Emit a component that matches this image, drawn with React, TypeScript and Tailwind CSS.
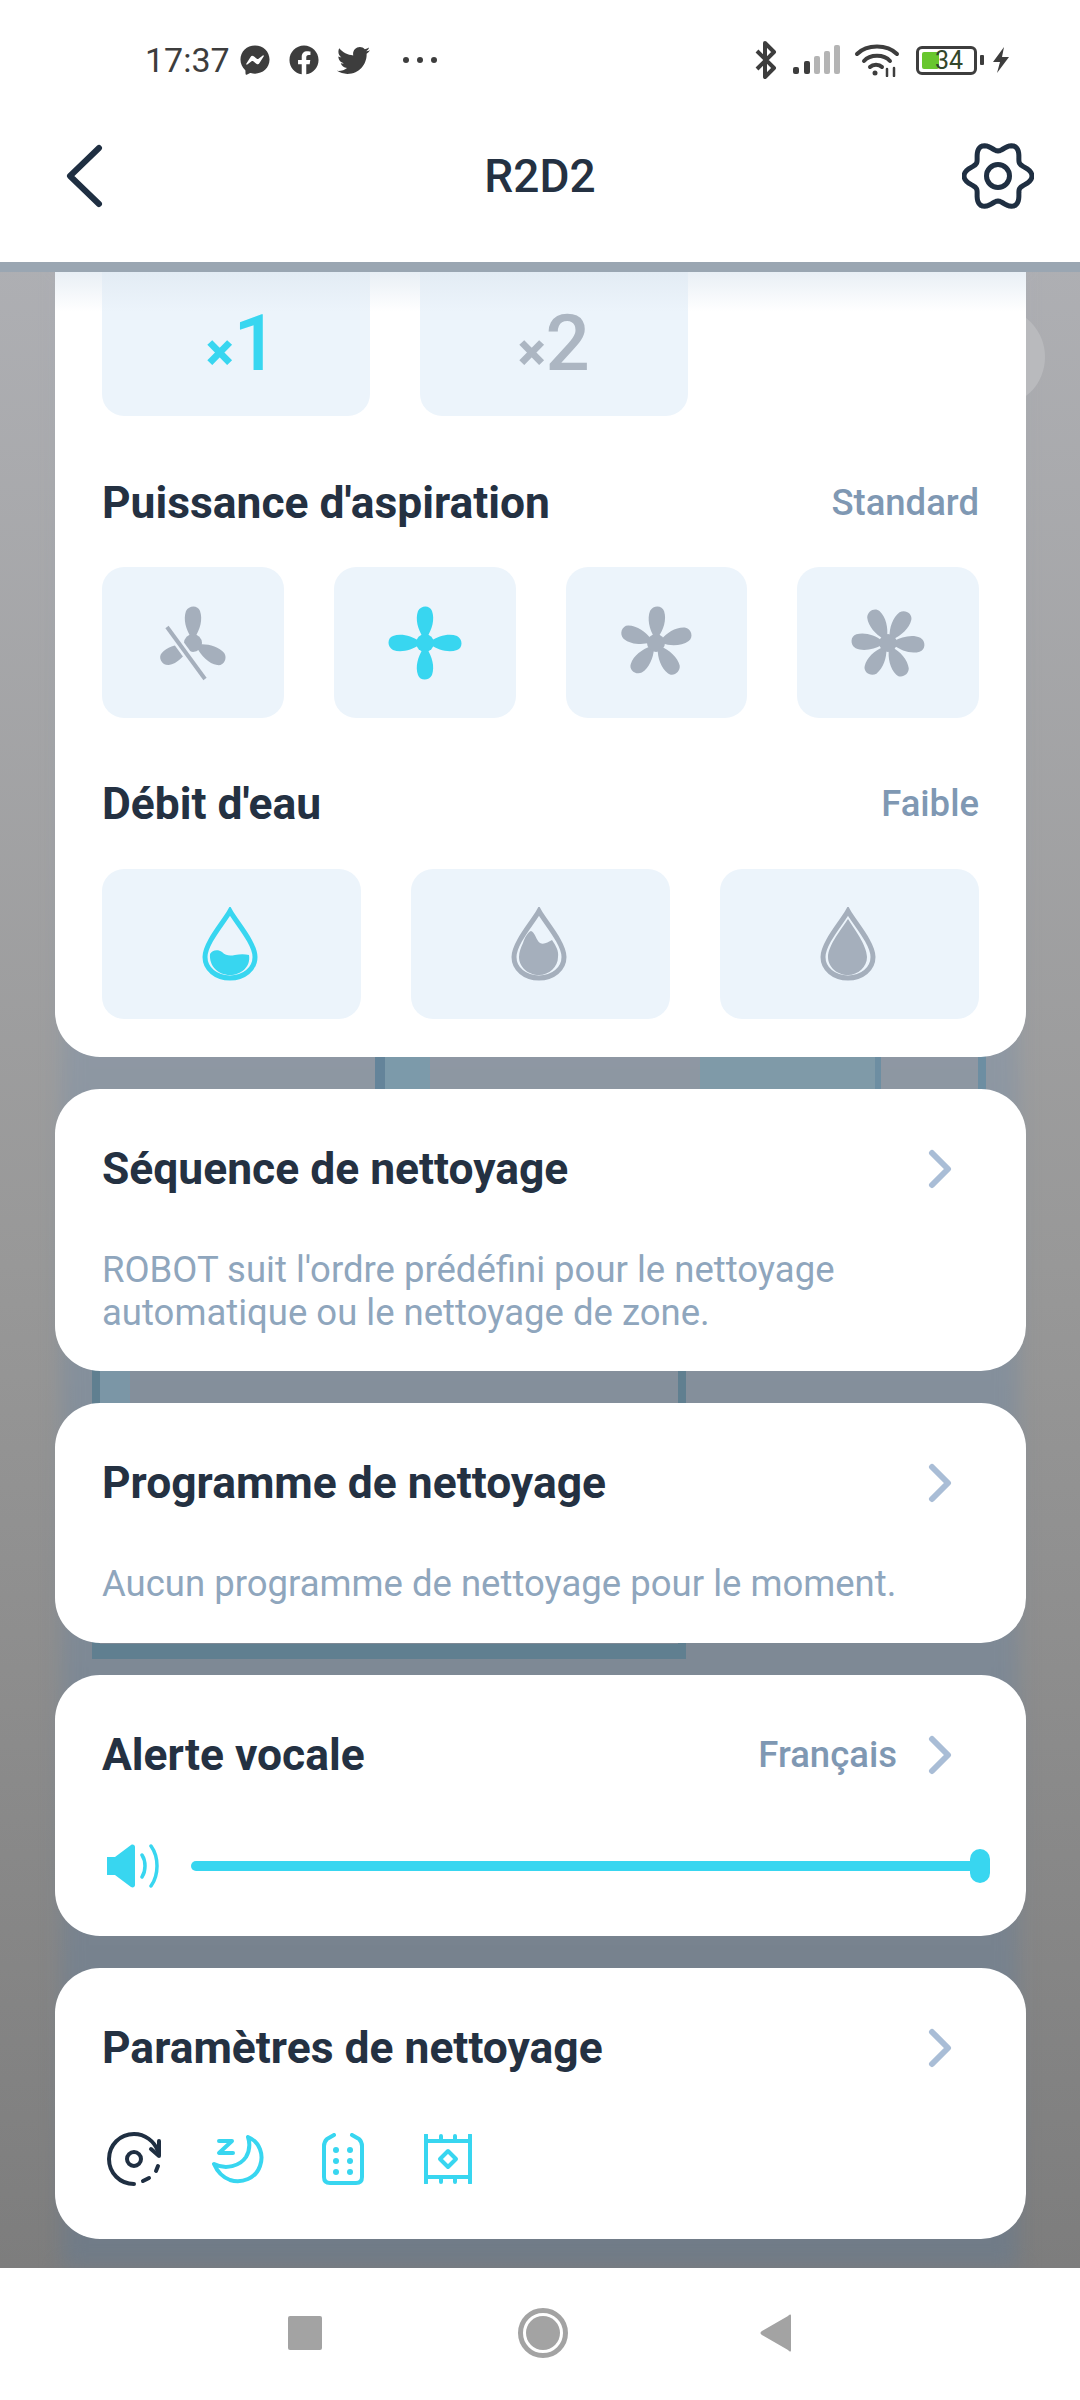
import { FaFacebook, FaFacebookMessenger, FaTwitter } from "react-icons/fa";

const CYAN = "#38d6f0";
const GREY = "#a5afbc";

function Fan({ blades, color, start = 0, off = false }: { blades: number; color: string; start?: number; off?: boolean }) {
  const angles = Array.from({ length: blades }, (_, i) => start + (i * 360) / blades);
  return (
    <svg viewBox="-40 -40 80 80" className="w-[80px] h-[80px]">
      {angles.map((a) => (
        <path key={a} transform={`rotate(${a})`} d="M-2 -6 C-7 -13 -10 -24 -7 -32 C-4 -38 5 -38 7 -32 C10 -24 7 -13 2 -6 Z" fill={color} />
      ))}
      <circle r="9" fill={color} />
      {off && <path d="M-26 -16 L12 36" stroke="#edf4fb" strokeWidth="9" />}
      {off && <path d="M-26 -16 L12 36" stroke={color} strokeWidth="4" />}
    </svg>
  );
}

function Drop({ color, level }: { color: string; level: "low" | "mid" | "full" }) {
  const fill =
    level === "low"
      ? "M8 47 C10 43 16 42 20 45 C24 49 28 49 33 48 C38 47 43 47 47 48 C49 60 39 68 28 68 C16 68 7 59 8 47 Z"
      : level === "mid"
        ? "M12 36 C14 30 17 25 20 24 C24 25 25 33 29 36 C33 38 37 35 41 33 C45 39 48 44 47 50 C47 60 38 68 28 68 C17 68 8 60 8 50 C8 45 10 40 12 36 Z"
        : "M28 12 C33 20 47 38 47 50 C47 60 38 68 28 68 C17 68 8 60 8 50 C8 38 23 20 28 12 Z";
  return (
    <svg viewBox="0 0 56 74" className="w-[56px] h-[74px] mr-[4px]">
      <path d="M28 4 C34 15 53 36 53 50 C53 62 42 71 28 71 C14 71 3 62 3 50 C3 36 22 15 28 4 Z" fill="none" stroke={color} strokeWidth="5" />
      <path d={fill} fill={color} />
    </svg>
  );
}

function Chevron() {
  return (
    <svg viewBox="0 0 26 40" className="w-[26px] h-[40px]" fill="none" stroke="#a9bdd6" strokeWidth="6" strokeLinecap="round" strokeLinejoin="round">
      <path d="M5 4 L21 20 L5 36" />
    </svg>
  );
}

function Gear() {
  const pts = Array.from({ length: 121 }, (_, i) => {
    const t = (i / 120) * Math.PI * 2;
    const r = 29.5 + 4.5 * Math.cos(6 * t);
    return `${(36 + r * Math.cos(t)).toFixed(2)} ${(36 + r * Math.sin(t)).toFixed(2)}`;
  });
  return (
    <svg viewBox="0 0 72 72" className="w-[72px] h-[72px]" fill="none" stroke="#1f2f42" strokeWidth="5">
      <path d={`M${pts.join(" L")} Z`} strokeLinejoin="round" />
      <circle cx="36" cy="36" r="11.5" />
    </svg>
  );
}

function StatusBar() {
  return (
    <div className="h-[92px] pt-[28px] pl-[145px] pr-[70px] flex items-center text-[#3d3d3d]">
      <span className="text-[34px] leading-none w-[95px]">17:37</span>
      <FaFacebookMessenger className="w-[30px] h-[30px]" />
      <FaFacebook className="w-[30px] h-[30px] ml-[19px]" />
      <FaTwitter className="w-[33px] h-[33px] ml-[18px]" />
      <div className="flex gap-[8px] ml-[33px]">
        <span className="w-[6px] h-[6px] rounded-full bg-[#3d3d3d]" />
        <span className="w-[6px] h-[6px] rounded-full bg-[#3d3d3d]" />
        <span className="w-[6px] h-[6px] rounded-full bg-[#3d3d3d]" />
      </div>

      <div className="ml-auto flex items-center">
        <svg viewBox="0 0 24 40" className="w-[24px] h-[40px]" fill="none" stroke="#3d3d3d" strokeWidth="4" strokeLinejoin="round">
          <path d="M3 11 L20 28 L11 37 L11 3 L20 12 L3 29" />
        </svg>
        <svg viewBox="0 0 48 30" className="w-[48px] h-[30px] ml-[15px]">
          <rect x="0" y="22" width="6" height="7" rx="2" fill="#3d3d3d" />
          <rect x="11" y="16" width="6" height="13" rx="2" fill="#3d3d3d" />
          <rect x="21" y="11" width="6" height="18" rx="2" fill="#b4b4b4" />
          <rect x="31" y="6" width="6" height="23" rx="2" fill="#b4b4b4" />
          <rect x="41" y="0" width="6" height="29" rx="2" fill="#b4b4b4" />
        </svg>
        <svg viewBox="0 0 46 34" className="w-[46px] h-[34px] ml-[13px]" fill="none" stroke="#3d3d3d" strokeWidth="4" strokeLinecap="round">
          <path d="M3 11 C13 1 33 1 43 11" />
          <path d="M10 18 C16 11 30 11 36 18" />
          <path d="M16 24 C19 21 25 21 28 24" />
          <circle cx="21" cy="30" r="2.5" fill="#3d3d3d" stroke="none" />
          <path d="M33 26 V33 M40 25 V33" strokeWidth="2.5" />
        </svg>
        <div className="relative w-[61px] h-[29px] ml-[16px] rounded-[6px] border-[3px] border-[#3d3d3d] flex items-center">
          <div className="absolute left-[3px] top-[3px] bottom-[3px] w-[17px] rounded-[2px] bg-[#68c62e]" />
          <span className="relative pl-[16px] text-[25px] leading-none text-[#33472b]">34</span>
        </div>
        <div className="w-[4px] h-[10px] ml-[3px] rounded-[1px] bg-[#3d3d3d]" />
        <svg viewBox="0 0 18 26" className="w-[18px] h-[26px] ml-[8px]" fill="#3d3d3d">
          <path d="M12 0 L1 15 L8 15 L5 26 L17 10 L10 10 Z" />
        </svg>
      </div>
    </div>
  );
}

function Header() {
  return (
    <header className="h-[170px] pb-[2px] pl-[64px] pr-[46px] flex items-center justify-between">
      <svg viewBox="0 0 40 64" className="w-[40px] h-[64px]" fill="none" stroke="#1f2f42" strokeWidth="6" strokeLinecap="round" strokeLinejoin="round">
        <path d="M35 4 L6 32 L35 60" />
      </svg>
      <h1 className="text-[46px] font-medium text-[#243142] leading-none ml-[14px]">R2D2</h1>
      <Gear />
    </header>
  );
}

function Tile({ children, className = "" }: { children: React.ReactNode; className?: string }) {
  return <div className={`bg-[#ecf4fb] rounded-[22px] flex items-center justify-center ${className}`}>{children}</div>;
}

function Times({ n, color }: { n: string; color: string }) {
  return (
    <div className="flex items-end" style={{ color }}>
      <span className="text-[52px] leading-none font-black mb-[4px]">×</span>
      <span className="text-[78px] leading-none font-medium">{n}</span>
    </div>
  );
}

function ModeCard() {
  return (
    <section className="relative bg-white rounded-b-[45px] px-[47px] h-[785px] overflow-hidden">
      <div className="grid grid-cols-[268px_268px] gap-x-[50px]">
        <Tile className="h-[144px] rounded-t-none pl-[12px]">
          <Times n="1" color={CYAN} />
        </Tile>
        <Tile className="h-[144px] rounded-t-none">
          <Times n="2" color="#acb6c2" />
        </Tile>
      </div>
      <div className="absolute left-0 right-0 top-0 h-[40px] bg-gradient-to-b from-[#dfe8f1]/70 to-transparent" />

      <div className="flex items-center justify-between mt-[63px] h-[48px]">
        <h2 className="text-[44.4px] font-bold text-[#243142] leading-none">Puissance d'aspiration</h2>
        <span className="text-[36.5px] font-medium text-[#7f98b3] leading-none">Standard</span>
      </div>
      <div className="grid grid-cols-4 gap-x-[50px] mt-[40px]">
        <Tile className="h-[151px]"><Fan blades={3} color={GREY} off /></Tile>
        <Tile className="h-[151px]"><Fan blades={4} color={CYAN} /></Tile>
        <Tile className="h-[151px]"><Fan blades={5} color={GREY} start={2} /></Tile>
        <Tile className="h-[151px]"><Fan blades={6} color={GREY} start={-27} /></Tile>
      </div>

      <div className="flex items-center justify-between mt-[62px] h-[48px]">
        <h2 className="text-[44.4px] font-bold text-[#243142] leading-none">Débit d'eau</h2>
        <span className="text-[36.5px] font-medium text-[#7f98b3] leading-none">Faible</span>
      </div>
      <div className="grid grid-cols-3 gap-x-[50px] mt-[41px]">
        <Tile className="h-[150px]"><Drop color={CYAN} level="low" /></Tile>
        <Tile className="h-[150px]"><Drop color={GREY} level="mid" /></Tile>
        <Tile className="h-[150px]"><Drop color={GREY} level="full" /></Tile>
      </div>
    </section>
  );
}

function InfoCard({ title, lines, height }: { title: string; lines: string[]; height: string }) {
  return (
    <section className={`bg-white rounded-[45px] px-[47px] pt-[56px] ${height}`}>
      <div className="flex items-center justify-between h-[48px] pr-[26px]">
        <h2 className="text-[44.4px] font-bold text-[#243142] leading-none">{title}</h2>
        <Chevron />
      </div>
      <p className="mt-[55px] text-[36.5px] leading-[43px] text-[#8fa6bd]">
        {lines.map((l) => (
          <span key={l} className="block">{l}</span>
        ))}
      </p>
    </section>
  );
}

function VolumeCard() {
  return (
    <section className="bg-white rounded-[45px] pl-[47px] pt-[56px] pr-[36px] h-[261px]">
      <div className="flex items-center justify-between h-[48px] pr-[37px]">
        <h2 className="text-[44.4px] font-bold text-[#243142] leading-none">Alerte vocale</h2>
        <div className="flex items-center gap-[30px]">
          <span className="text-[36.5px] font-medium text-[#7f98b3] leading-none">Français</span>
          <Chevron />
        </div>
      </div>
      <div className="flex items-center mt-[65px] pl-[5px]">
        <svg viewBox="0 0 52 44" className="w-[52px] h-[44px]">
          <path d="M0 13 H8 L24 1 C26 0 28 1 28 3 V41 C28 43 26 44 24 43 L8 31 H0 Z" fill={CYAN} />
          <path d="M35 11 C39 17 39 27 35 33 M44 2 C52 13 52 31 44 42" fill="none" stroke={CYAN} strokeWidth="3.5" strokeLinecap="round" />
        </svg>
        <div className="relative ml-[32px] flex-1 h-[10px] rounded-full bg-[#38d6f0]">
          <div className="absolute right-0 top-[-12px] w-[20px] h-[34px] rounded-[10px] bg-[#38d6f0]" />
        </div>
      </div>
    </section>
  );
}

function CleaningCard() {
  return (
    <section className="bg-white rounded-[45px] px-[47px] pt-[56px] h-[271px]">
      <div className="flex items-center justify-between h-[48px] pr-[26px]">
        <h2 className="text-[44.4px] font-bold text-[#243142] leading-none">Paramètres de nettoyage</h2>
        <Chevron />
      </div>
      <div className="flex items-center mt-[60px] pl-[5px]">
        <svg viewBox="0 0 54 54" className="w-[54px] h-[54px]" fill="none" stroke="#1f2f42" strokeWidth="4" strokeLinecap="round">
          <path d="M27 52 C13 52 2 41 2 27 C2 13 13 2 27 2 C38 2 47 9 51 19" />
          <path d="M52 9 L52 24 L44 17" strokeLinejoin="round" />
          <path d="M51 34 L49 39 M42 46 L36 49" />
          <circle cx="27" cy="27" r="7" />
        </svg>
        <svg viewBox="0 0 52 52" className="w-[52px] h-[52px] ml-[51px]" fill="none" stroke={CYAN} strokeWidth="4" strokeLinecap="round" strokeLinejoin="round">
          <path d="M36 4 C48 9 52 22 48 33 C44 45 30 51 18 47 C10 44 5 38 2 31 C14 37 28 33 34 24 C38 17 38 10 36 4 Z" />
          <path d="M7 8 H20 L7 20 H21" />
        </svg>
        <svg viewBox="0 0 42 52" className="w-[42px] h-[52px] ml-[58px]" fill="none" stroke={CYAN} strokeWidth="4" strokeLinecap="round" strokeLinejoin="round">
          <path d="M12 2 L5 6 C3 8 2 10 2 13 V44 C2 48 4 50 8 50 H34 C38 50 40 48 40 44 V13 C40 10 39 8 37 6 L30 2" />
          <g fill={CYAN} stroke="none">
            <circle cx="14" cy="17" r="3" />
            <circle cx="28" cy="17" r="3" />
            <circle cx="14" cy="28" r="3" />
            <circle cx="28" cy="28" r="3" />
            <circle cx="14" cy="39" r="3" />
            <circle cx="28" cy="39" r="3" />
          </g>
        </svg>
        <svg viewBox="0 0 48 50" className="w-[48px] h-[50px] ml-[60px]" fill="none" stroke={CYAN} strokeWidth="4" strokeLinecap="round" strokeLinejoin="round">
          <path d="M2 1 V49 M46 1 V49 M2 7 H46 M2 43 H46 M17 2 V7 M31 2 V7 M17 43 V48 M31 43 V48" />
          <path d="M24 17 L32 25 L24 33 L16 25 Z" />
        </svg>
      </div>
    </section>
  );
}

// blurred room photo behind the cards
function Backdrop() {
  return (
    <div className="absolute inset-0 bg-gradient-to-b from-[#aeafb3] via-[#989898] to-[#7d7d7d] overflow-hidden">
      <div className="absolute left-[62px] right-[62px] top-0 bottom-0 bg-gradient-to-b from-[#a8acb4] via-[#87929e] to-[#707b87] blur-[10px]" />
      <div className="absolute inset-x-0 top-0 h-[10px] bg-[#9aa6b2]" />
      <div className="absolute right-[35px] top-[45px] w-[110px] h-[100px] rounded-full bg-[#b9babd]" />
      <div className="absolute left-[375px] w-[10px] top-[760px] h-[90px] bg-[#64849a]" />
      <div className="absolute left-[385px] w-[45px] top-[760px] h-[90px] bg-[#7c9aaa]" />
      <div className="absolute left-[700px] w-[175px] top-[760px] h-[90px] bg-[#7f9aa8]" />
      <div className="absolute left-[875px] w-[6px] top-[760px] h-[90px] bg-[#6d8ea2]" />
      <div className="absolute left-[978px] w-[8px] top-[760px] h-[90px] bg-[#6d8ea2]" />
      <div className="absolute left-[92px] w-[594px] top-[1100px] h-[297px] border-x-[8px] border-b-[15px] border-[#607f90]" />
      <div className="absolute left-[100px] w-[30px] top-[1100px] h-[60px] bg-[#7b96a6]" />
    </div>
  );
}

export default function App() {
  return (
    <div className="w-[1080px] h-[2400px] flex flex-col bg-white font-['Roboto',sans-serif]">
      <div className="shrink-0 bg-white">
        <StatusBar />
        <Header />
      </div>
      <main className="relative flex-1 overflow-hidden">
        <Backdrop />
        <div className="relative flex flex-col gap-[32px] pt-[10px] pl-[55px] pr-[54px]">
          <ModeCard />
          <InfoCard height="h-[282px]" title="Séquence de nettoyage" lines={["ROBOT suit l'ordre prédéfini pour le nettoyage", "automatique ou le nettoyage de zone."]} />
          <InfoCard height="h-[240px]" title="Programme de nettoyage" lines={["Aucun programme de nettoyage pour le moment."]} />
          <VolumeCard />
          <CleaningCard />
        </div>
      </main>
      <nav className="shrink-0 h-[132px] bg-white flex items-center justify-center">
        <div className="flex items-center gap-[196px] pb-[2px]">
          <div className="w-[34px] h-[34px] rounded-[2px] bg-[#a3a3a3]" />
          <div className="w-[50px] h-[50px] rounded-full border-[5px] border-[#a3a3a3] p-[3px]">
            <div className="w-full h-full rounded-full bg-[#a3a3a3]" />
          </div>
          <svg viewBox="0 0 32 38" className="w-[32px] h-[38px] -ml-[4px]" fill="#a3a3a3">
            <path d="M31 2 V36 C31 38 30 38 28 36 L2 21 C0 20 0 18 2 17 L28 2 C30 0 31 0 31 2 Z" />
          </svg>
        </div>
      </nav>
    </div>
  );
}
